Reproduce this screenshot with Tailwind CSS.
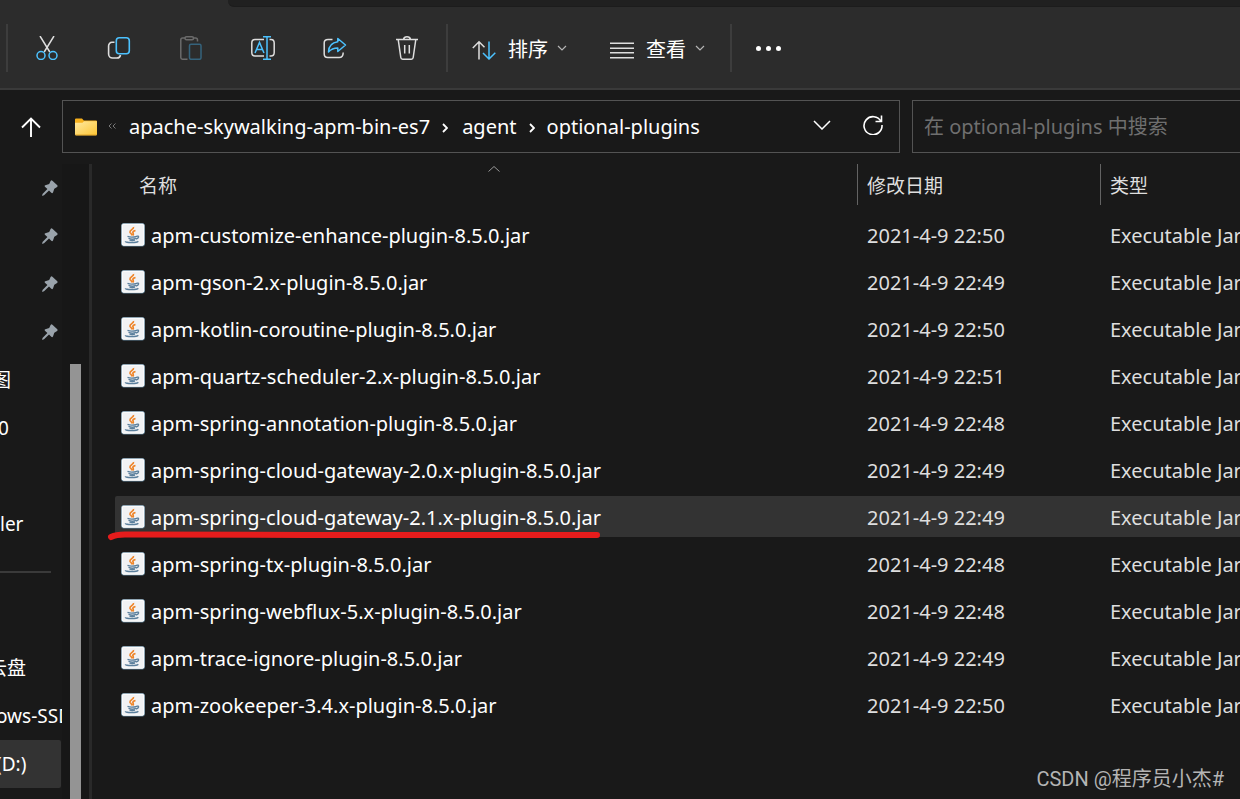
<!DOCTYPE html>
<html lang="zh-CN">
<head>
<meta charset="utf-8">
<title>optional-plugins</title>
<script src="https://cdn.jsdelivr.net/npm/@tailwindcss/browser@4"></script>
</head>
<body class="flex h-screen flex-col overflow-hidden bg-[#191919] font-['Noto_Sans','Noto_Sans_CJK_SC',sans-serif] text-[20px] leading-6 text-white">
<svg class="hidden">
  <symbol id="jar" viewBox="0 0 24 24">
    <rect x="0.5" y="0.5" width="23" height="22.5" rx="2" fill="#f1f2f4" stroke="#5f7f93"/>
    <rect x="1.2" y="1.2" width="21.6" height="21" rx="1.5" fill="none" stroke="#fff"/>
    <path d="M12.500 4c.6 2.200-4.200 3-3.500 5.200.4 1.100 2 1.600 1.800 3.300M14.500 7.500c-2.200.6-3.200 1.500-2.400 2.700.5.900.4 1.500-.3 2.300" fill="none" stroke="#ee8428" stroke-width="1.700"/>
    <path d="M6.500 13.400c2 .7 7 .6 9.300-.1M7.500 15.400c2 .7 5.800.7 7.500 0M8.500 17.100c1.500.5 4 .5 5.500 0M15.500 13.300c3-.8 2.600 1.800-.5 2.700M4.500 18.200c-.5 1.900 11.500 1.700 12.800 0" fill="none" stroke="#5b7f9c" stroke-width="1.400"/>
  </symbol>
  <symbol id="pin" viewBox="0 0 16 16">
    <path d="M8.600.9Q9.500-.1 10.400.8L15.300 5.200Q16 6.200 15.100 6.900L12.300 8.800 11 12.600Q10.300 13.700 9.300 12.800L7 10.600 2 15.200.1 15.900.5 14 5.400 9 2.900 6.700Q2.200 5.700 3.300 5.200L7.200 3.900Z" fill="#9aa3ab"/>
  </symbol>
  <symbol id="down" viewBox="0 0 10 6"><path d="M1 1l4 4 4-4" fill="none" stroke="#b5b5b5" stroke-width="1.200"/></symbol>
  <symbol id="crumb" viewBox="0 0 6 10"><path d="M1 1l4 4-4 4" fill="none" stroke="#fff" stroke-width="1.800"/></symbol>
</svg>

<div class="h-[7px] shrink-0 bg-[#2c2c2c] pl-[228px]"><div class="h-full rounded-bl-md border-b border-[#1c1c1c] bg-[#202020]"></div></div>

<header class="flex h-[83px] shrink-0 items-center border-b-2 border-[#3a3a3a] bg-[#2c2c2c] pl-1.5">
  <div class="mr-[3px] h-12 w-0.5 bg-[#3d3d3d]"></div>
  <button aria-label="剪切" class="flex w-[72px] justify-center"><svg class="size-6" viewBox="0 0 24 24" fill="none" stroke-width="1.500"><path d="M5 0l9.800 16M19 0L9.200 16" stroke="#dedede"/><circle cx="6" cy="19.500" r="4" stroke="#4cc2ff"/><circle cx="18" cy="19.500" r="4" stroke="#4cc2ff"/></svg></button>
  <button aria-label="复制" class="flex w-[72px] justify-center"><svg class="size-6" viewBox="0 0 24 24" fill="none" stroke-width="1.600"><path d="M7.500 6.300H5A3.500 3.500 0 0 0 1.600 10v8a4 4 0 0 0 4 4H10q3 0 3.500-3" stroke="#dedede"/><rect x="9.300" y="1.800" width="13" height="16" rx="3" stroke="#4cc2ff"/></svg></button>
  <button aria-label="粘贴" class="flex w-[72px] justify-center"><svg class="size-6" viewBox="0 0 24 24" fill="none" stroke-width="1.500"><path d="M6 2H3.500Q1.800 2 1.800 3.700V21.500Q1.800 23.200 3.500 23.200H8.500M14.500 2H16.500Q18.500 2 18.500 4V5.500" stroke="#6b6b6b"/><rect x="6" y=".8" width="8.500" height="3" rx="1.500" stroke="#6b6b6b"/><rect x="10.500" y="8.300" width="11.500" height="15" rx="1.500" stroke="#35637c"/></svg></button>
  <button aria-label="重命名" class="flex w-[72px] justify-center"><svg class="size-6" viewBox="0 0 24 24" fill="none" stroke-width="1.500"><path d="M13 3.500H4Q.8 3.500 .8 7v9.500q0 3.500 3.200 3.500h9M18.500 3.500H20q3.200 0 3.200 3.500v9.500q0 3.500-3.200 3.500h-1.500" stroke="#dedede"/><path d="M4 17L8.500 6.500 13 17M5.500 13.500h6M12 .8h8M12 23.200h8M16 .8v22.400" stroke="#4cc2ff"/></svg></button>
  <button aria-label="共享" class="flex w-[72px] justify-center"><svg class="size-6" viewBox="0 0 24 24" fill="none" stroke-width="1.500" stroke-linejoin="round"><path d="M9.500 3.500H5Q1.200 3.500 1.200 7v11q0 3.500 3.500 3.500h11.500q4 0 4-5" stroke="#dedede"/><path d="M14.800 2.500L22.500 9l-7.700 6.500V12Q9 12 5.500 16 5.800 7 14.800 5.800Z" stroke="#4cc2ff"/></svg></button>
  <button aria-label="删除" class="flex w-[72px] justify-center"><svg class="size-6" viewBox="0 0 24 24" fill="none" stroke="#dedede" stroke-width="1.500"><path d="M1 3.500h22M8.500 3.500Q9 .8 12 .8t3.500 2.700M3.200 3.500L5.800 21.500Q6 23.200 7.700 23.200h8.600q1.700 0 1.900-1.700L20.800 3.500M9.700 9v8.500M14.300 9v8.500"/></svg></button>
  <div class="ml-[3px] mr-6 h-12 w-0.5 bg-[#3d3d3d]"></div>
  <button class="flex items-center pt-1"><svg class="mr-3 h-5 w-6" viewBox="0 0 24 20" fill="none" stroke-width="1.500"><path d="M7 19.500V2M.8 8L7 1.800l5.500 5.500" stroke="#dedede"/><path d="M17 1.500V19M11 13l6 6 6.300-6.200" stroke="#4cc2ff"/></svg>排序<svg class="mb-1 ml-[9px] h-1.5 w-2.5"><use href="#down"/></svg></button>
  <button class="ml-[43px] flex items-center pt-1"><svg class="mr-3 h-5 w-6" viewBox="0 0 24 20" stroke="#dedede" stroke-width="1.500"><path d="M0 3.200h24M0 8.200h24M0 12.700h24M0 17.700h24"/></svg>查看<svg class="mb-1 ml-[9px] h-1.5 w-2.5"><use href="#down"/></svg></button>
  <div class="ml-[25px] h-12 w-0.5 bg-[#3d3d3d]"></div>
  <button aria-label="更多" class="mt-0.5 ml-6 flex gap-[5px]"><span class="size-[5px] rounded-full bg-white"></span><span class="size-[5px] rounded-full bg-white"></span><span class="size-[5px] rounded-full bg-white"></span></button>
</header>

<div class="flex shrink-0 items-center pt-2.5 pb-[11px]">
  <button aria-label="上移" class="flex w-[62px] justify-center"><svg class="size-5" viewBox="0 0 20 20" fill="none" stroke="#fff" stroke-width="1.900"><path d="M10 20V1.500M1 10.500l9-9 9 9"/></svg></button>
  <nav class="flex h-[53px] min-w-0 flex-1 items-center border border-[#535353] pl-3">
    <svg class="h-[18px] w-[22px]" viewBox="0 0 22 18"><defs><linearGradient id="fold" x1="0" y1="0" x2="1" y2="1"><stop stop-color="#ffe9a2"/><stop offset="1" stop-color="#fdc534"/></linearGradient></defs><path d="M0 1.500Q0 .5 1 .5h6l1.800 2H21q1 0 1 1V16H0Z" fill="#f7b01c"/><path d="M0 4.800h7.500L9 3.300h13V16.200q0 1-1 1H1q-1 0-1-1Z" fill="url(#fold)"/><path d="M.5 17h21" stroke="#e2a528"/></svg>
    <svg class="mb-0.5 ml-[11px] h-1.5 w-2" viewBox="0 0 8 6" fill="none" stroke="#777"><path d="M3.500.5L1 3l2.500 2.500M7.500.5L5 3l2.500 2.500"/></svg>
    <a href="#" class="ml-[13px] whitespace-nowrap">apache-skywalking-apm-bin-es7</a>
    <svg class="mt-0.5 ml-3 h-2.5 w-1.5"><use href="#crumb"/></svg>
    <a href="#" class="ml-3.5">agent</a>
    <svg class="mt-0.5 ml-3 h-2.5 w-1.5"><use href="#crumb"/></svg>
    <a href="#" class="ml-3 whitespace-nowrap">optional-plugins</a>
    <button aria-label="历史记录" class="mb-1 ml-auto"><svg class="h-2.5 w-[18px]" viewBox="0 0 18 10" fill="none" stroke="#fff" stroke-width="1.500"><path d="M1 1l8 8 8-8"/></svg></button>
    <button aria-label="刷新" class="mr-4 mb-1 ml-8"><svg class="size-5" viewBox="0 0 20 20" fill="none" stroke="#fff" stroke-width="1.600"><path d="M18 6.500A9 9 0 1 0 19 10M18.500 .5V6.500H12.500"/></svg></button>
  </nav>
  <input type="search" aria-label="搜索" placeholder="在 optional-plugins 中搜索" class="ml-3 h-[53px] w-[328px] border border-r-0 border-[#535353] bg-transparent pl-[11px] outline-none placeholder:text-[#6f6f6f]">
</div>

<div class="flex min-h-0 flex-1">
  <aside class="flex shrink-0 border-r-[3px] border-[#292929] text-[19px]">
    <ul class="w-[62px] overflow-hidden whitespace-nowrap">
      <li class="flex h-12 items-center justify-end pr-1"><svg class="size-4"><use href="#pin"/></svg></li>
      <li class="flex h-12 items-center justify-end pr-1"><svg class="size-4"><use href="#pin"/></svg></li>
      <li class="flex h-12 items-center justify-end pr-1"><svg class="size-4"><use href="#pin"/></svg></li>
      <li class="flex h-12 items-center justify-end pr-1"><svg class="size-4"><use href="#pin"/></svg></li>
      <li class="-ml-2 flex h-12 items-center">图</li>
      <li class="-ml-0.5 flex h-12 items-center">0</li>
      <li class="h-12"></li>
      <li class="flex h-12 items-center">ler</li>
      <li class="flex h-12 items-center"><div class="h-0.5 w-[51px] bg-[#3a3a3a]"></div></li>
      <li class="h-12"></li>
      <li class="-ml-3 flex h-12 items-center">云盘</li>
      <li class="-ml-1 flex h-12 items-center">ows-SSD</li>
      <li class="mr-px flex h-12 items-center rounded-r-xs bg-[#333]"><span class="-ml-1">(D:)</span></li>
    </ul>
    <div class="w-[27px] bg-[#171717] pt-[200px] pl-2"><div class="h-full w-[11px] bg-[#949494]"></div></div>
  </aside>
  <main class="relative min-w-0 flex-1 overflow-hidden pl-[23px]">
    <svg class="absolute top-0.5 left-[396px] h-1.5 w-3" viewBox="0 0 12 6" fill="none" stroke="#999"><path d="M.5 5.500L6 .5l5.500 5"/></svg>
    <table class="w-full table-fixed text-left whitespace-nowrap">
      <thead class="text-[19px] text-[#dedede]">
        <tr class="h-[47px] align-top">
          <th class="p-0 font-normal"><div class="flex h-[41px] items-center pt-0.5 pl-6">名称</div></th>
          <th class="w-[243px] p-0 font-normal"><div class="flex h-[41px] items-center border-l border-[#636363] pt-0.5 pl-[9px]">修改日期</div></th>
          <th class="w-[140px] p-0 font-normal"><div class="flex h-[41px] items-center border-l border-[#636363] pt-0.5 pl-[9px]">类型</div></th>
        </tr>
      </thead>
      <tbody>
        <tr class="h-[47px]"><td class="p-0"><div class="flex h-[41px] items-center gap-1.5 pt-[3px] pl-1.5"><svg class="mb-0.5 size-6"><use href="#jar"/></svg>apm-customize-enhance-plugin-8.5.0.jar</div></td><td class="p-0 text-[#dedede]"><div class="flex h-[41px] items-center pt-[3px] pl-2.5">2021-4-9 22:50</div></td><td class="p-0 text-[#dedede]"><div class="flex h-[41px] items-center pt-[3px] pl-2.5">Executable Jar</div></td></tr>
        <tr class="h-[47px]"><td class="p-0"><div class="flex h-[41px] items-center gap-1.5 pt-[3px] pl-1.5"><svg class="mb-0.5 size-6"><use href="#jar"/></svg>apm-gson-2.x-plugin-8.5.0.jar</div></td><td class="p-0 text-[#dedede]"><div class="flex h-[41px] items-center pt-[3px] pl-2.5">2021-4-9 22:49</div></td><td class="p-0 text-[#dedede]"><div class="flex h-[41px] items-center pt-[3px] pl-2.5">Executable Jar</div></td></tr>
        <tr class="h-[47px]"><td class="p-0"><div class="flex h-[41px] items-center gap-1.5 pt-[3px] pl-1.5"><svg class="mb-0.5 size-6"><use href="#jar"/></svg>apm-kotlin-coroutine-plugin-8.5.0.jar</div></td><td class="p-0 text-[#dedede]"><div class="flex h-[41px] items-center pt-[3px] pl-2.5">2021-4-9 22:50</div></td><td class="p-0 text-[#dedede]"><div class="flex h-[41px] items-center pt-[3px] pl-2.5">Executable Jar</div></td></tr>
        <tr class="h-[47px]"><td class="p-0"><div class="flex h-[41px] items-center gap-1.5 pt-[3px] pl-1.5"><svg class="mb-0.5 size-6"><use href="#jar"/></svg>apm-quartz-scheduler-2.x-plugin-8.5.0.jar</div></td><td class="p-0 text-[#dedede]"><div class="flex h-[41px] items-center pt-[3px] pl-2.5">2021-4-9 22:51</div></td><td class="p-0 text-[#dedede]"><div class="flex h-[41px] items-center pt-[3px] pl-2.5">Executable Jar</div></td></tr>
        <tr class="h-[47px]"><td class="p-0"><div class="flex h-[41px] items-center gap-1.5 pt-[3px] pl-1.5"><svg class="mb-0.5 size-6"><use href="#jar"/></svg>apm-spring-annotation-plugin-8.5.0.jar</div></td><td class="p-0 text-[#dedede]"><div class="flex h-[41px] items-center pt-[3px] pl-2.5">2021-4-9 22:48</div></td><td class="p-0 text-[#dedede]"><div class="flex h-[41px] items-center pt-[3px] pl-2.5">Executable Jar</div></td></tr>
        <tr class="h-[47px]"><td class="p-0"><div class="flex h-[41px] items-center gap-1.5 pt-[3px] pl-1.5"><svg class="mb-0.5 size-6"><use href="#jar"/></svg>apm-spring-cloud-gateway-2.0.x-plugin-8.5.0.jar</div></td><td class="p-0 text-[#dedede]"><div class="flex h-[41px] items-center pt-[3px] pl-2.5">2021-4-9 22:49</div></td><td class="p-0 text-[#dedede]"><div class="flex h-[41px] items-center pt-[3px] pl-2.5">Executable Jar</div></td></tr>
        <tr class="h-[47px]"><td class="p-0"><div class="relative flex h-[41px] items-center gap-1.5 rounded-l-xs bg-[#333] pt-[3px] pl-1.5"><svg class="mb-0.5 size-6"><use href="#jar"/></svg>apm-spring-cloud-gateway-2.1.x-plugin-8.5.0.jar<svg class="absolute top-[34px] -left-2 h-3 w-[496px]" viewBox="0 0 496 12" fill="none" stroke="#e61c1c" stroke-width="6" stroke-linecap="round"><path d="M4 7Q9 4.500 18 4.500L200 5H490"/></svg></div></td><td class="p-0 text-[#dedede]"><div class="flex h-[41px] items-center bg-[#333] pt-[3px] pl-2.5">2021-4-9 22:49</div></td><td class="p-0 text-[#dedede]"><div class="flex h-[41px] items-center bg-[#333] pt-[3px] pl-2.5">Executable Jar</div></td></tr>
        <tr class="h-[47px]"><td class="p-0"><div class="flex h-[41px] items-center gap-1.5 pt-[3px] pl-1.5"><svg class="mb-0.5 size-6"><use href="#jar"/></svg>apm-spring-tx-plugin-8.5.0.jar</div></td><td class="p-0 text-[#dedede]"><div class="flex h-[41px] items-center pt-[3px] pl-2.5">2021-4-9 22:48</div></td><td class="p-0 text-[#dedede]"><div class="flex h-[41px] items-center pt-[3px] pl-2.5">Executable Jar</div></td></tr>
        <tr class="h-[47px]"><td class="p-0"><div class="flex h-[41px] items-center gap-1.5 pt-[3px] pl-1.5"><svg class="mb-0.5 size-6"><use href="#jar"/></svg>apm-spring-webflux-5.x-plugin-8.5.0.jar</div></td><td class="p-0 text-[#dedede]"><div class="flex h-[41px] items-center pt-[3px] pl-2.5">2021-4-9 22:48</div></td><td class="p-0 text-[#dedede]"><div class="flex h-[41px] items-center pt-[3px] pl-2.5">Executable Jar</div></td></tr>
        <tr class="h-[47px]"><td class="p-0"><div class="flex h-[41px] items-center gap-1.5 pt-[3px] pl-1.5"><svg class="mb-0.5 size-6"><use href="#jar"/></svg>apm-trace-ignore-plugin-8.5.0.jar</div></td><td class="p-0 text-[#dedede]"><div class="flex h-[41px] items-center pt-[3px] pl-2.5">2021-4-9 22:49</div></td><td class="p-0 text-[#dedede]"><div class="flex h-[41px] items-center pt-[3px] pl-2.5">Executable Jar</div></td></tr>
        <tr class="h-[47px]"><td class="p-0"><div class="flex h-[41px] items-center gap-1.5 pt-[3px] pl-1.5"><svg class="mb-0.5 size-6"><use href="#jar"/></svg>apm-zookeeper-3.4.x-plugin-8.5.0.jar</div></td><td class="p-0 text-[#dedede]"><div class="flex h-[41px] items-center pt-[3px] pl-2.5">2021-4-9 22:50</div></td><td class="p-0 text-[#dedede]"><div class="flex h-[41px] items-center pt-[3px] pl-2.5">Executable Jar</div></td></tr>
      </tbody>
    </table>
    <p class="absolute right-4 bottom-2 font-[Roboto,'Noto_Sans_CJK_SC',sans-serif] text-[#b4b4b4]">CSDN @程序员小杰#</p>
  </main>
</div>
</body>
</html>
